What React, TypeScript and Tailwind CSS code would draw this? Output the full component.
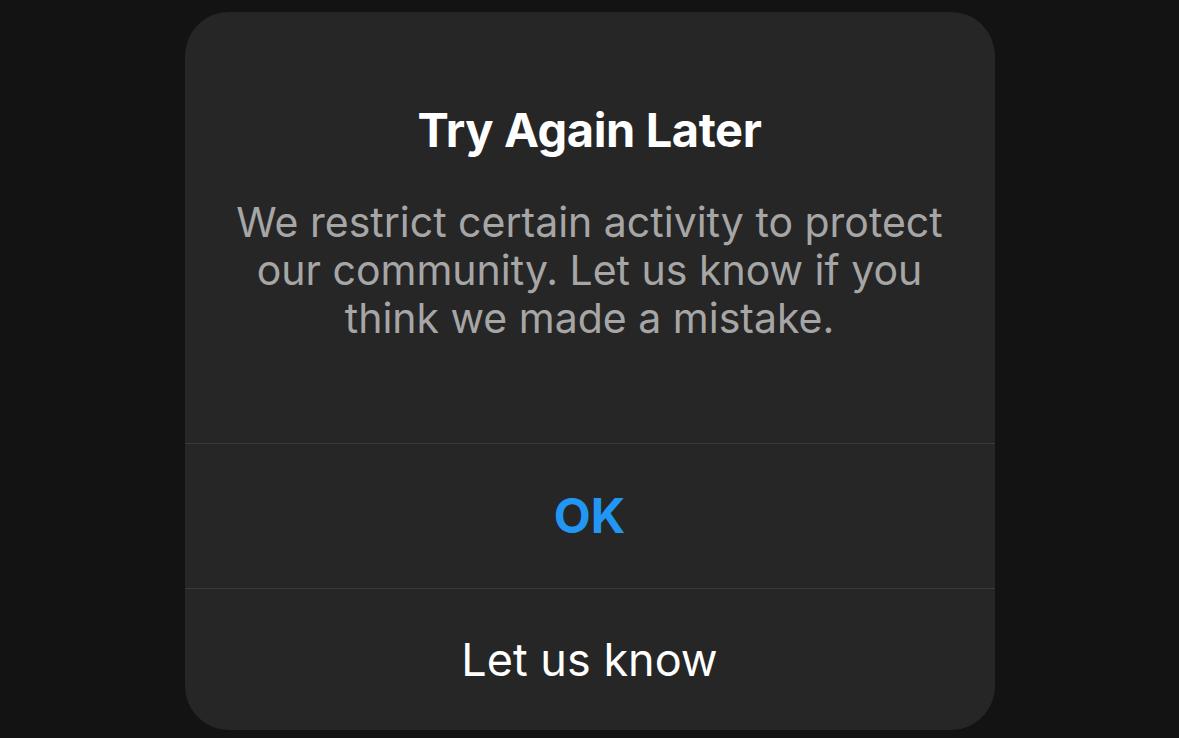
import React from "react";

export default function App() {
  return (
    <div
      className="w-[1179px] h-[738px] bg-[#131313] flex justify-center pt-[12px]"
      style={{ fontFamily: "Inter, 'Noto Sans', sans-serif" }}
    >
      <div className="w-[810px] h-[718px] bg-[#262626] rounded-[44px] flex flex-col overflow-hidden">
        <div className="h-[432px] flex flex-col items-center pt-[90px] px-10 border-b border-[#3a3a3a]">
          <h1 className="text-[47px] leading-[56px] font-bold text-white tracking-[-0.4px]">
            Try Again Later
          </h1>
          <p className="mt-[40px] text-[41px] leading-[48px] text-[#a6a6a6] text-center">
            We restrict certain activity to protect
            <br />
            our community. Let us know if you
            <br />
            think we made a mistake.
          </p>
        </div>
        <button className="h-[145px] border-b border-[#3a3a3a] text-[48px] font-bold text-[#2196f3] flex items-center justify-center">
          OK
        </button>
        <button className="flex-1 text-[45px] text-white flex items-center justify-center">
          Let us know
        </button>
      </div>
    </div>
  );
}
